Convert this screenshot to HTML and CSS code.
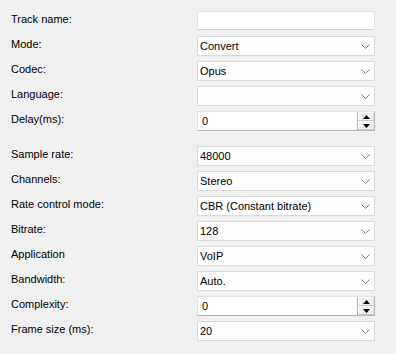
FILE: index.html
```html
<!DOCTYPE html>
<html lang="en">
<head>
    <meta charset="UTF-8">
    <meta name="viewport" content="width=device-width, initial-scale=1.0">
    <title>Track Settings</title>
    <link rel="stylesheet" href="styles.css">
</head>
<body>
    <div class="panel">
        <!-- General -->
        <div class="form-grid">
            <div class="label">Track name:</div>
            <div class="edit"></div>

            <div class="label">Mode:</div>
            <div class="combo"><span>Convert</span><svg class="chevron" width="9" height="5" viewBox="0 0 9 5"><path d="M0.5 0.5 L4.5 4.5 L8.5 0.5" /></svg></div>

            <div class="label">Codec:</div>
            <div class="combo"><span>Opus</span><svg class="chevron" width="9" height="5" viewBox="0 0 9 5"><path d="M0.5 0.5 L4.5 4.5 L8.5 0.5" /></svg></div>

            <div class="label">Language:</div>
            <div class="combo"><span></span><svg class="chevron" width="9" height="5" viewBox="0 0 9 5"><path d="M0.5 0.5 L4.5 4.5 L8.5 0.5" /></svg></div>

            <div class="label">Delay(ms):</div>
            <div class="spin">
                <span>0</span>
                <div class="spin-buttons">
                    <div class="spin-btn"><svg width="7" height="4" viewBox="0 0 7 4"><path d="M0 4 L3.5 0 L7 4 Z" /></svg></div>
                    <div class="spin-btn"><svg width="7" height="4" viewBox="0 0 7 4"><path d="M0 0 L3.5 4 L7 0 Z" /></svg></div>
                </div>
            </div>
        </div>

        <!-- Codec options -->
        <div class="form-grid section">
            <div class="label">Sample rate:</div>
            <div class="combo"><span>48000</span><svg class="chevron" width="9" height="5" viewBox="0 0 9 5"><path d="M0.5 0.5 L4.5 4.5 L8.5 0.5" /></svg></div>

            <div class="label">Channels:</div>
            <div class="combo"><span>Stereo</span><svg class="chevron" width="9" height="5" viewBox="0 0 9 5"><path d="M0.5 0.5 L4.5 4.5 L8.5 0.5" /></svg></div>

            <div class="label">Rate control mode:</div>
            <div class="combo"><span>CBR (Constant bitrate)</span><svg class="chevron" width="9" height="5" viewBox="0 0 9 5"><path d="M0.5 0.5 L4.5 4.5 L8.5 0.5" /></svg></div>

            <div class="label">Bitrate:</div>
            <div class="combo"><span>128</span><svg class="chevron" width="9" height="5" viewBox="0 0 9 5"><path d="M0.5 0.5 L4.5 4.5 L8.5 0.5" /></svg></div>

            <div class="label">Application</div>
            <div class="combo"><span>VoIP</span><svg class="chevron" width="9" height="5" viewBox="0 0 9 5"><path d="M0.5 0.5 L4.5 4.5 L8.5 0.5" /></svg></div>

            <div class="label">Bandwidth:</div>
            <div class="combo"><span>Auto.</span><svg class="chevron" width="9" height="5" viewBox="0 0 9 5"><path d="M0.5 0.5 L4.5 4.5 L8.5 0.5" /></svg></div>

            <div class="label">Complexity:</div>
            <div class="spin">
                <span>0</span>
                <div class="spin-buttons">
                    <div class="spin-btn"><svg width="7" height="4" viewBox="0 0 7 4"><path d="M0 4 L3.5 0 L7 4 Z" /></svg></div>
                    <div class="spin-btn"><svg width="7" height="4" viewBox="0 0 7 4"><path d="M0 0 L3.5 4 L7 0 Z" /></svg></div>
                </div>
            </div>

            <div class="label">Frame size (ms):</div>
            <div class="combo"><span>20</span><svg class="chevron" width="9" height="5" viewBox="0 0 9 5"><path d="M0.5 0.5 L4.5 4.5 L8.5 0.5" /></svg></div>
        </div>
    </div>
</body>
</html>
```

FILE: styles.css
```css
body {
    margin: 0;
    background: #f0f0f0;
    font-family: "Liberation Sans", Arial, sans-serif;
    font-size: 11px;
    color: #000;
}

.panel {
    padding: 11px 0 0 11px;
}

.form-grid {
    display: grid;
    grid-template-columns: 186px 178px;
    grid-auto-rows: 20px;
    row-gap: 5px;
}

.form-grid.section {
    margin-top: 15px;
}

.label {
    padding-top: 1px;
    line-height: 14px;
}

.edit {
    background: #fff;
    border: 1px solid #e3e3e3;
    border-bottom-color: #d0d0d0;
    height: 17px;
}

.combo {
    display: flex;
    align-items: center;
    justify-content: space-between;
    background: #fdfdfd;
    border: 1px solid #d9d9d9;
    padding: 0 4px 0 2px;
    box-sizing: border-box;
}

.chevron path {
    fill: none;
    stroke: #808080;
    stroke-width: 1;
}

.spin {
    display: flex;
    align-items: center;
    justify-content: space-between;
    background: #fff;
    border: 1px solid #b4b4b4;
    border-top-color: #e3e3e3;
    border-left-color: #e3e3e3;
    box-sizing: border-box;
    height: 20px;
    padding-left: 4px;
}

.spin-buttons {
    display: flex;
    flex-direction: column;
    width: 16px;
    height: 100%;
    border-left: 1px solid #b4b4b4;
}

.spin-btn {
    flex: 1;
    display: flex;
    align-items: center;
    justify-content: center;
    background: #f0f0f0;
    border: 1px solid #fff;
    border-right-color: #e0e0e0;
    border-bottom-color: #c8c8c8;
}

.spin-btn path {
    fill: #000;
}
```
